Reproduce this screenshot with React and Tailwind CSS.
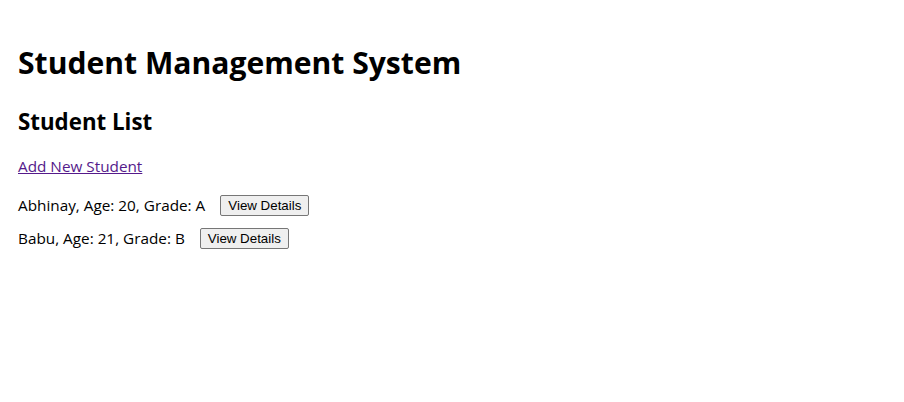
import React from "react";

const students = [
  { id: 1, name: "Abhinay", age: 20, grade: "A" },
  { id: 2, name: "Babu", age: 21, grade: "B" },
];

function StudentRow({ student }) {
  return (
    <div className="flex items-center h-[33px]">
      <span>
        {student.name}, Age: {student.age}, Grade: {student.grade}
      </span>
      <button className="ml-[15px] h-[21px] px-[7px] text-[13.33px] leading-none font-['Liberation_Sans',Arial,sans-serif] bg-[#efefef] border border-[#767676] rounded-[2px] text-black">
        View Details
      </button>
    </div>
  );
}

export default function App() {
  return (
    <div className="min-h-screen bg-white text-black font-['Open_Sans','Noto_Sans',sans-serif] text-[15.3px] px-[18px] pt-[42px]">
      {/* Header */}
      <h1 className="text-[30.1px] font-bold leading-[42px]">Student Management System</h1>
      <h2 className="mt-[22px] text-[22.3px] font-bold leading-[32px]">Student List</h2>
      <div className="mt-[17px]">
        <a href="#" className="underline text-[#551a8b]">
          Add New Student
        </a>
      </div>
      <div className="mt-[11px]">
        {students.map((s) => (
          <StudentRow key={s.id} student={s} />
        ))}
      </div>
    </div>
  );
}
